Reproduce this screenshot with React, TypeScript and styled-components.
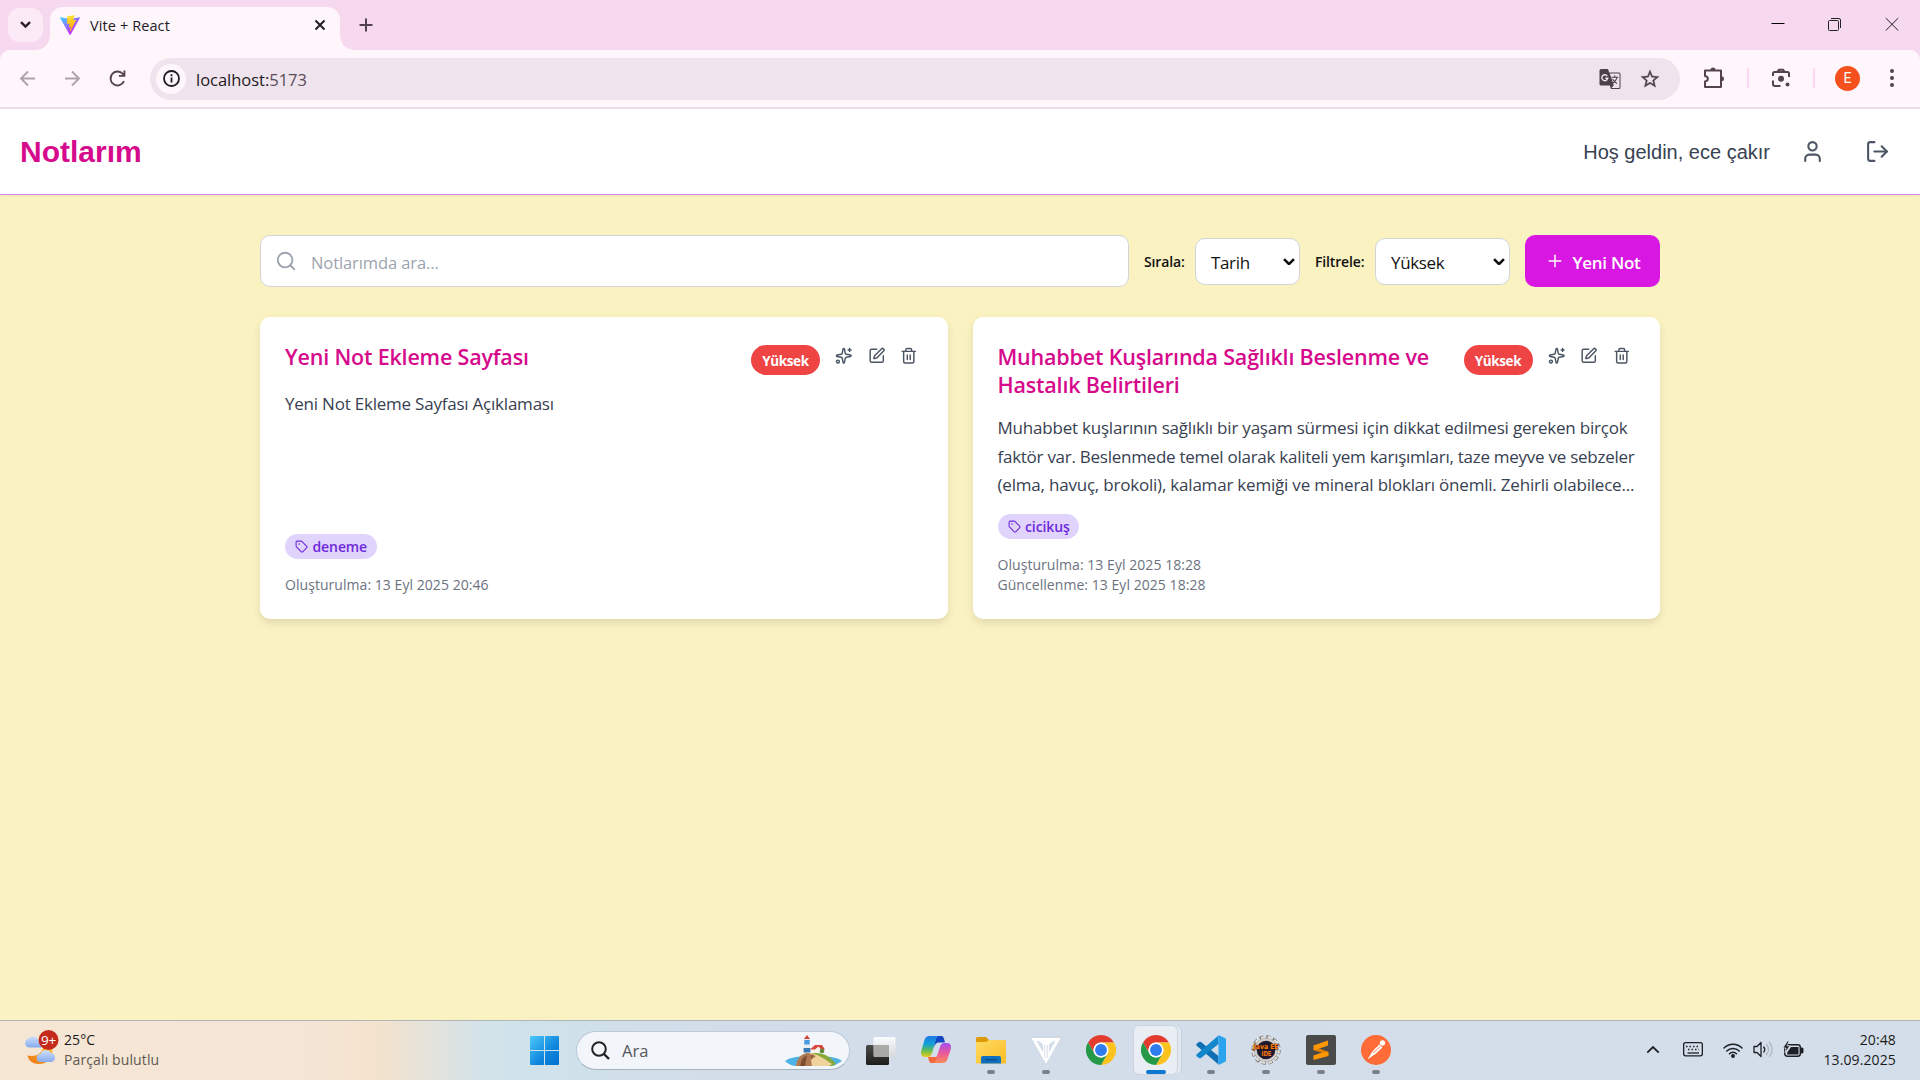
import React from 'react';
import styled, { createGlobalStyle, css } from 'styled-components';
import { LogOut, Plus, Search, Sparkles, SquarePen, Tag, Trash2, User } from 'lucide-react';

const ui = `'Open Sans', 'Noto Sans', sans-serif`;

const GlobalStyle = createGlobalStyle`
  *, *::before, *::after { box-sizing: border-box; }
  body { margin: 0; font-family: ${ui}; overflow: hidden; }
  button, input, select { font: inherit; }
  svg { display: block; flex-shrink: 0; }
`;

const Screen = styled.div`
  width: 1920px;
  height: 1080px;
  display: flex;
  flex-direction: column;
  overflow: hidden;
  background: #faf2c1;
`;

/* ---------- browser ---------- */

const TabStrip = styled.div`
  height: 50px;
  flex-shrink: 0;
  display: flex;
  align-items: flex-start;
  padding-left: 8px;
  background: #f7d9ef;
`;

const TabSearch = styled.button`
  width: 35px;
  height: 34px;
  margin: 8px 7px 0 0;
  padding: 0;
  border: 0;
  border-radius: 12px;
  background: #fdeaf7;
  display: grid;
  place-items: center;
`;

const ActiveTab = styled.div`
  position: relative;
  width: 290px;
  height: 43px;
  margin-top: 7px;
  padding: 0 13px 7px 10px;
  border-radius: 13px 13px 0 0;
  background: #fef6fa;
  display: flex;
  align-items: center;
  &::before,
  &::after {
    content: '';
    position: absolute;
    bottom: 0;
    width: 14px;
    height: 14px;
  }
  &::before {
    left: -14px;
    background: radial-gradient(circle at 0 0, transparent 13.5px, #fef6fa 14px);
  }
  &::after {
    right: -14px;
    background: radial-gradient(circle at 100% 0, transparent 13.5px, #fef6fa 14px);
  }
`;

const TabTitle = styled.span`
  flex: 1;
  margin-left: 10px;
  font-size: 14.5px;
  letter-spacing: 0.1px;
  color: #1f1a1e;
`;

const NewTab = styled.div`
  margin: 18px 0 0 19px;
`;

const WindowButtons = styled.div`
  margin: 17px 21px 0 auto;
  display: flex;
  gap: 43px;
`;

const ToolbarBack = styled.div`
  height: 59px;
  flex-shrink: 0;
  background: #f7d9ef;
`;

const Toolbar = styled.div`
  height: 59px;
  padding: 0 22px 1px 15px;
  border-bottom: 2px solid #efdeea;
  border-radius: 10px 10px 0 0;
  background: #fef6fa;
  display: flex;
  align-items: center;
`;

const NavButtons = styled.div`
  width: 135px;
  display: flex;
  align-items: center;
  gap: 20px;
`;

const AddressBar = styled.div`
  width: 1530px;
  height: 42px;
  margin-top: 1px;
  padding: 0 19px 0 6px;
  border-radius: 21px;
  background: #efe4ee;
  display: flex;
  align-items: center;
`;

const SiteInfo = styled.div`
  width: 30px;
  height: 30px;
  margin-right: 10px;
  border-radius: 50%;
  background: #fef6fa;
  display: grid;
  place-items: center;
`;

const Url = styled.span`
  flex: 1;
  padding-top: 1px;
  font-size: 16.5px;
  letter-spacing: -0.02px;
  color: #1f1a1e;
  span { color: #5a4d57; }
`;

const AddressActions = styled.div`
  display: flex;
  align-items: center;
  gap: 18px;
`;

const ToolbarActions = styled.div`
  flex: 1;
  padding-left: 23px;
  display: flex;
  align-items: center;
  gap: 22px;
  > :last-child { margin-left: auto; }
`;

const Divider = styled.span`
  width: 2px;
  height: 20px;
  border-radius: 1px;
  background: #fdd7f2;
`;

const Avatar = styled.span`
  width: 25px;
  height: 25px;
  margin-left: -2px;
  border-radius: 50%;
  background: #f4511e;
  color: #fff;
  font: 14px Roboto, sans-serif;
  display: grid;
  place-items: center;
`;

/* ---------- notes app ---------- */

const AppHeader = styled.header`
  position: relative;
  height: 86px;
  flex-shrink: 0;
  padding: 0 30px 0 20px;
  border-bottom: 1px solid #dc87e4;
  background: #fff;
  box-shadow: 0 1px 3px rgba(0, 0, 0, 0.06);
  display: flex;
  align-items: center;
  justify-content: space-between;
`;

const Brand = styled.h1`
  margin: 0;
  font: bold 30px 'Liberation Sans', Arial, sans-serif;
  color: #d60a8c;
`;

const UserArea = styled.div`
  display: flex;
  align-items: center;
  color: #4b5563;
`;

const Welcome = styled.span`
  margin-right: 30px;
  padding-top: 2px;
  font: 20px 'Liberation Sans', Arial, sans-serif;
  color: #374151;
`;

const IconSlot = styled.span<{ $left?: number }>`
  margin-left: ${(p) => p.$left ?? 0}px;
`;

const Main = styled.main`
  flex: 1;
  width: 1400px;
  margin: 0 auto;
  padding-top: 40px;
`;

const Controls = styled.div`
  display: flex;
  align-items: center;
  gap: 15px;
  margin-bottom: 30px;
`;

const SearchBox = styled.div`
  flex: 1;
  height: 52px;
  padding: 0 14px;
  border: 1px solid #d1d5db;
  border-radius: 10px;
  background: #fff;
  display: flex;
  align-items: center;
  gap: 14px;
  color: #9ca3af;
`;

const SearchInput = styled.input`
  flex: 1;
  padding: 2px 0 0;
  border: 0;
  outline: 0;
  background: none;
  font-size: 16.5px;
  letter-spacing: -0.1px;
  &::placeholder { color: #9ca3af; opacity: 1; }
`;

const Field = styled.label<{ $width: number }>`
  width: ${(p) => p.$width}px;
  display: flex;
  align-items: center;
  justify-content: space-between;
  font-size: 14px;
  font-weight: 600;
  letter-spacing: -0.15px;
  color: #111;
  white-space: nowrap;
`;

const SelectBox = styled.span<{ $width: number }>`
  width: ${(p) => p.$width}px;
  height: 47px;
  padding: 0 4px 0 15px;
  border: 1px solid #d1d5db;
  border-radius: 10px;
  background: #fff;
  display: flex;
  align-items: center;
  justify-content: space-between;
  font-size: 17px;
  font-weight: 400;
  letter-spacing: -0.35px;
  > span { padding-top: 3px; }
  > svg { margin-top: 1px; }
`;

const NewNote = styled.button`
  width: 135px;
  height: 52px;
  padding: 0;
  border: 0;
  border-radius: 10px;
  background: #d817e2;
  color: #fff;
  display: flex;
  align-items: center;
  justify-content: center;
  gap: 8px;
  font-size: 17px;
  font-weight: 600;
  letter-spacing: -0.3px;
  span { padding-top: 2px; }
`;

const Cards = styled.div`
  display: grid;
  grid-template-columns: repeat(2, minmax(0, 1fr));
  gap: 25px;
`;

const Card = styled.article`
  height: 302px;
  padding: 26px 25px 24px;
  border-radius: 10px;
  background: #fff;
  box-shadow: 0 4px 8px rgba(0, 0, 0, 0.1);
  display: flex;
  flex-direction: column;
`;

const CardHead = styled.div`
  display: flex;
  justify-content: space-between;
  align-items: flex-start;
  margin-bottom: 15px;
`;

const CardTitle = styled.h2`
  width: 440px;
  margin: 0;
  font-size: 21.5px;
  line-height: 28px;
  font-weight: 600;
  letter-spacing: -0.19px;
  color: #d60a8c;
  white-space: pre-line;
`;

const CardTools = styled.div`
  display: flex;
  align-items: flex-start;
  gap: 15px;
  padding-right: 5px;
  color: #4b5563;
  svg { margin-top: 4px; }
`;

const Priority = styled.span`
  width: 69px;
  height: 30px;
  margin: 2px 0 0;
  border-radius: 15px;
  background: #ef4444;
  color: #fff;
  font-size: 13.5px;
  line-height: 32px;
  font-weight: 700;
  letter-spacing: -0.4px;
  text-align: center;
`;

const Body = styled.p`
  margin: 0;
  font-size: 17px;
  line-height: 28.6px;
  color: #374151;
  white-space: nowrap;
`;

const BodyLine = styled.span<{ $tracking: number }>`
  display: block;
  letter-spacing: ${(p) => p.$tracking}px;
`;

const TagChip = styled.span`
  align-self: flex-start;
  height: 25px;
  margin-top: auto;
  padding: 0 9.5px 0 10px;
  border-radius: 13px;
  background: #e0d4fd;
  color: #6d28d9;
  display: flex;
  align-items: center;
  gap: 4.5px;
  font-size: 14px;
  font-weight: 600;
  letter-spacing: -0.1px;
`;

const Dates = styled.div`
  margin-top: 16px;
  font-size: 14px;
  line-height: 20px;
  letter-spacing: 0.05px;
  color: #6b7280;
`;

/* ---------- taskbar ---------- */

const Taskbar = styled.footer`
  height: 60px;
  flex-shrink: 0;
  border-top: 1px solid #b0b4bc;
  background: linear-gradient(90deg, #f6e6d4 0, #f5e5d6 300px, #f3e3cd 380px, #d4e3ea 480px, #cfe2ea 520px, #d3dde9 720px, #d4deea 100%);
  display: grid;
  grid-template-columns: 530px 875px 1fr;
  align-items: center;
`;

const Weather = styled.div`
  padding: 0 0 1px 24px;
  display: flex;
  align-items: center;
  gap: 4px;
  > svg { margin-bottom: 5px; }
`;

const Stack = styled.div<{ $end?: boolean }>`
  display: flex;
  flex-direction: column;
  font-size: 14px;
  line-height: 20px;
  letter-spacing: 0.12px;
  color: #1b1b1b;
  ${(p) => p.$end && css`text-align: right; padding-bottom: 1px;`}
`;

const Muted = styled.span`
  color: #5f5953;
`;

const Dock = styled.div`
  height: 59px;
  display: flex;
  align-items: center;
`;

const TaskSearch = styled.div`
  width: 274px;
  flex-shrink: 0;
  height: 39px;
  margin: 0 16px 0 17px;
  padding: 0 7px 0 14px;
  border: 1px solid #bccbd9;
  border-bottom-color: #a5b1bf;
  border-radius: 20px;
  background: #f2f5f9;
  display: flex;
  align-items: center;
  font-size: 16.5px;
  color: #55585c;
  span { flex: 1; margin-left: 12px; }
`;

const DockItems = styled.div`
  height: 59px;
  margin-left: 13px;
  display: flex;
  gap: 1px;
`;

const DockItem = styled.div<{ $state?: 'open' | 'active' }>`
  position: relative;
  width: 54px;
  height: 59px;
  padding-top: 14px;
  display: flex;
  flex-direction: column;
  align-items: center;
  gap: 5px;
  > svg { position: relative; }
  &::after {
    content: '';
    position: relative;
    width: ${(p) => (p.$state === 'active' ? 20 : 8)}px;
    height: 4px;
    border-radius: 2px;
    background: ${(p) => (p.$state === 'active' ? '#0b78d4' : p.$state ? '#7c8189' : 'transparent')};
  }
  ${(p) =>
    p.$state === 'active' &&
    css`
      &::before {
        content: '';
        position: absolute;
        left: 5px;
        top: 5px;
        width: 43px;
        height: 48px;
        border-radius: 5px;
        background: #e9eef5;
        box-shadow: 0 0 0 1px #cbd4df, 4px 0 0 0 #e3e9f1, 5px 0 0 0 #c5cfdb;
      }
    `}
`;

const Tray = styled.div`
  padding-right: 24px;
  display: flex;
  align-items: center;
  justify-content: flex-end;
`;

const TrayIcons = styled.div`
  margin-right: 19px;
  padding-bottom: 2px;
  display: flex;
  align-items: center;
  gap: 10px;
`;

/* ---------- drawings ---------- */

const ViteLogo = () => (
  <svg width="20" height="20" viewBox="0 0 256 257">
    <defs>
      <linearGradient id="va" x1="-.8%" x2="57.6%" y1="7.7%" y2="78.4%"><stop stopColor="#41D1FF" /><stop offset="1" stopColor="#BD34FE" /></linearGradient>
      <linearGradient id="vb" x1="43.4%" x2="50.3%" y1="2.2%" y2="89%"><stop stopColor="#FFEA83" /><stop offset=".083" stopColor="#FFDD35" /><stop offset="1" stopColor="#FFA800" /></linearGradient>
    </defs>
    <path fill="url(#va)" d="M255.2 37.9 134.9 253c-2.5 4.4-8.9 4.5-11.4 0L.9 37.9c-2.7-4.8 1.4-10.6 6.8-9.6l120.4 21.5c.7.1 1.5.1 2.3 0l117.9-21.5c5.4-1 9.6 4.8 6.9 9.6Z" />
    <path fill="url(#vb)" d="M185.4 0 96.400 17.500a3.300 3.300 0 0 0-2.600 3l-5.500 92.500c-.1 2.200 1.900 3.900 4 3.400l24.800-5.700c2.300-.5 4.400 1.500 3.900 3.800l-7.400 36c-.5 2.500 1.800 4.500 4.100 3.800l15.400-4.600c2.300-.7 4.600 1.400 4.100 3.800l-11.700 56.700c-.7 3.500 4 5.500 5.900 2.500l1.300-2 72.500-144.700c1.200-2.400-.9-5.200-3.500-4.700l-25.500 4.900c-2.400.5-4.400-1.800-3.800-4.100l16.700-57.700c.7-2.400-1.400-4.600-3.700-4.400Z" />
  </svg>
);

const Chevron = ({ w = 11, color = '#111', up = false, sw = 2.4 }: { w?: number; color?: string; up?: boolean; sw?: number }) => (
  <svg width={w} height={w * 0.65} viewBox="0 0 11 7" fill="none" stroke={color} strokeWidth={sw}>
    <path d={up ? 'M1 6l4.500-4.500L10 6' : 'M1 1l4.500 4.500L10 1'} />
  </svg>
);

const Arrow = ({ flip = false }: { flip?: boolean }) => (
  <svg width="25" height="25" viewBox="0 0 25 25" fill="none" stroke="#aea3aa" strokeWidth="1.900" transform={flip ? 'scale(-1 1)' : undefined}>
    <path d="M20 12.500H6.500M13 5.500l-7 7 7 7" />
  </svg>
);

const Reload = () => (
  <svg width="25" height="25" viewBox="0 0 25 25" fill="none" stroke="#54424e" strokeWidth="1.900">
    <path d="M19 15.200A7 7 0 1 1 18.200 8.300L19.500 10M19.400 4.500v5.400h-5.500" />
  </svg>
);

const Translate = () => (
  <svg width="22" height="22" viewBox="0 0 22 22">
    <path d="M2 1h7l1.200 3.500H20a1.500 1.500 0 0 1 1.500 1.500v13.500A1.500 1.500 0 0 1 20 21h-8l-1.200-3.500H2A1.500 1.500 0 0 1 .500 16V2.500A1.500 1.500 0 0 1 2 1Z" fill="#4b4148" />
    <path d="M10.700 5.500H20a.5.5 0 0 1 .5.500v13.400a.5.5 0 0 1-.5.500h-7.500l2.300-2.600Z" fill="#efe4ee" />
    <path d="M12.500 9.200h6.800M15.700 7.500v1.700M18 9.300c-.6 2.700-2.400 4.800-4.300 6M13.500 11c1 2 2.500 3.500 4.500 4.500" stroke="#4b4148" strokeWidth="1.100" fill="none" />
    <path d="M8.300 8A3 3 0 1 0 8.800 10.200H6.300" stroke="#efe4ee" strokeWidth="1.400" fill="none" />
  </svg>
);

const Star = () => (
  <svg width="22" height="22" viewBox="0 0 24 24" fill="#4b4148" stroke="#4b4148" strokeWidth=".3">
    <path d="m22 9.240-7.190-.620L12 2 9.190 8.630 2 9.240l5.460 4.730L5.820 21 12 17.270 18.180 21l-1.630-7.030L22 9.240zM12 15.400l-3.760 2.270 1-4.280-3.320-2.880 4.380-.380L12 6.100l1.710 4.040 4.380.380-3.320 2.880 1 4.280L12 15.400z" />
  </svg>
);

const Puzzle = () => (
  <svg width="22" height="22" viewBox="0 0 22 22" fill="none" stroke="#54424e" strokeWidth="2">
    <path d="M2 3.500h16v16.500H2v-5.500c3.800-.5 3.800-5 0-5.500Z" strokeLinejoin="round" />
    <path d="M7.500 3a2.500 2.500 0 0 1 5 0ZM18.500 9.300a2.500 2.500 0 0 1 0 5Z" fill="#54424e" stroke="none" />
  </svg>
);

const Lens = () => (
  <svg width="20" height="20" viewBox="0 0 20 20" fill="none" stroke="#54424e" strokeWidth="2">
    <path d="M2 8V5.500A1.500 1.500 0 0 1 3.500 4h13A1.500 1.500 0 0 1 18 5.500V9M2 12.500v3.500A2 2 0 0 0 4 18h5.500M6.500 3.500 8 1.800h4l1.500 1.700" />
    <circle cx="10" cy="10.700" r="3" fill="#54424e" stroke="none" />
    <circle cx="16.500" cy="16.500" r="2" fill="#54424e" stroke="none" />
  </svg>
);

const WeatherIcon = () => (
  <svg width="36" height="36" viewBox="0 0 36 36">
    <defs>
      <linearGradient id="cl" x1="0" x2="0" y1="0" y2="1"><stop stopColor="#cfe0fa" /><stop offset="1" stopColor="#86abeb" /></linearGradient>
      <linearGradient id="mo" x1="1" x2="0" y1="0" y2="1"><stop stopColor="#fbbd2c" /><stop offset="1" stopColor="#ec7413" /></linearGradient>
    </defs>
    <path d="M28 18c2 10-5 16-13 16-6 0-10.500-3-11.500-8.500C10 27 17 25 19 18Z" fill="url(#mo)" />
    <path d="M5 17.500a4.500 4.500 0 0 1-.500-8.800C6 5.500 12 5 14 9.500h3v8Z" fill="url(#cl)" />
    <path d="M17 32a4 4 0 0 1-.500-8c1.500-5 9-5 10.500-1 5-.5 6 9-.5 9Z" fill="url(#cl)" />
    <circle cx="24.500" cy="10" r="10" fill="#c42b1c" />
    <text x="24.500" y="14.900" textAnchor="middle" fontFamily="Open Sans, sans-serif" fontSize="13.500" fill="#fff" letterSpacing="-.3">9+</text>
  </svg>
);

const WindowsLogo = () => (
  <svg width="29" height="29" viewBox="0 0 29 29">
    <defs><linearGradient id="wi" x1="0" y1="0" x2="1" y2="1" gradientUnits="objectBoundingBox"><stop stopColor="#4cc8fb" /><stop offset=".6" stopColor="#0f86dd" /><stop offset="1" stopColor="#0070cf" /></linearGradient></defs>
    <path fill="url(#wi)" d="M1 0h13v14H0V1a1 1 0 0 1 1-1ZM15 0h13a1 1 0 0 1 1 1v13H15ZM0 15h14v14H1a1 1 0 0 1-1-1ZM15 15h14v13a1 1 0 0 1-1 1H15Z" />
  </svg>
);

const Lighthouse = () => (
  <svg width="57" height="32" viewBox="0 0 57 32">
    <path d="M0 26c5-4 15-5 28-5s25 1 29 5c-5 3-8 5-11 5H12C7 31 3 29 0 26Z" fill="#4db3e6" />
    <path d="M11 31c1-6 5-12 12-13h9c10 1 14 5 19 11l-4 2Z" fill="#8aa83a" />
    <path d="M11 31c1-6 5-12 14-13 8 1 16 7 22 11l-3 2Z" fill="#f0d39c" />
    <path d="M11 31c1-7 4-12 12-13l8 3-5 4 1 6Z" fill="#b07a50" />
    <path d="m17 24 5-4-2 11h-5ZM26 21l3-2-3 5Z" fill="#7c4c31" />
    <path d="M19.500 4h5l1 14h-7Z" fill="#e9edf2" /><path d="M19.300 5h5.400v4.500h-5.400Z" fill="#4a9be0" /><path d="M18.600 13h6.800v4.500h-6.800Z" fill="#3978b6" /><path d="m19 4 3-4 3 4Z" fill="#d0413a" />
    <path d="M27 13h11v5H27Z" fill="#f6f4ef" /><path d="m25 14.500 5-4.500h7l3 4.500h-4l-2.500-3-3.500 3Z" fill="#d9473c" />
    <circle cx="37" cy="16" r="2.300" fill="#5c8a36" />
  </svg>
);

const TaskView = () => (
  <svg width="30" height="30" viewBox="0 0 30 30">
    <defs>
      <linearGradient id="tv" x1="0" x2="0" y1="0" y2="1"><stop stopColor="#4a4a49" /><stop offset="1" stopColor="#1d1d1c" /></linearGradient>
      <linearGradient id="tw" x1="0" x2="0" y1="0" y2="1"><stop stopColor="#fff" /><stop offset="1" stopColor="#d8d8d8" /></linearGradient>
    </defs>
    <rect x="0" y="9" width="23" height="20" rx="1.500" fill="url(#tv)" />
    <rect x="7.500" y="1" width="22" height="20" rx="1.500" fill="url(#tw)" opacity=".88" />
    <path d="M8 9h15v12H8Z" fill="#a9a9a8" />
  </svg>
);

const Copilot = () => (
  <svg width="30" height="30" viewBox="0 0 30 30">
    <defs>
      <linearGradient id="c1" x1="0" x2="0" y1="0" y2="1"><stop stopColor="#1e78e8" /><stop offset=".4" stopColor="#13a3d2" /><stop offset=".7" stopColor="#68bd4d" /><stop offset="1" stopColor="#efcb1d" /></linearGradient>
      <linearGradient id="c2" x1="0" x2="0" y1="0" y2="1"><stop stopColor="#a24cf0" /><stop offset=".5" stopColor="#e95a9c" /><stop offset="1" stopColor="#fa8a54" /></linearGradient>
    </defs>
    <path d="M15 1h5.500c2 0 2.500 2.500 3.500 6.500h-6c-3 0-4 2-5 5Z" fill="#1546c2" />
    <path d="M15 28h-4.500c-2 0-2.500-2-3.500-6h7c2 0 3-2 4-5Z" fill="#f26a3c" />
    <path d="M8.500 1h9c-2 1-2.500 3-3.500 7l-3 10c-1 3-2 4-4.500 4H4c-4 0-4.500-3-3.500-7L3.500 5c1-3 2.500-4 5-4Z" fill="url(#c1)" />
    <path d="M21.500 28h-9c2-1 2.500-3 3.500-7l3-9c1-3 2-4 4.500-4H26c4 0 4.500 3 3.500 7l-3 9c-1 3-2.500 4-5 4Z" fill="url(#c2)" />
  </svg>
);

const Explorer = () => (
  <svg width="30" height="30" viewBox="0 0 30 30">
    <defs><linearGradient id="ex" x1="0" x2="1" y1="0" y2="1"><stop stopColor="#ffdb63" /><stop offset="1" stopColor="#f9bd26" /></linearGradient></defs>
    <path d="M0 3.500A1.500 1.500 0 0 1 1.500 2H10l3 3H28a2 2 0 0 1 2 2H0Z" fill="#dc9b07" />
    <path d="M0 7 10 7 13 5h15a2 2 0 0 1 2 2v21.500H0Z" fill="url(#ex)" />
    <path d="M5 28.500V23a2 2 0 0 1 2-2h16a2 2 0 0 1 2 2v5.500Z" fill="#0f70c0" /><path d="M9 24.800h12" stroke="#07477e" strokeWidth="1.200" />
  </svg>
);

const Triangle = () => (
  <svg width="30" height="30" viewBox="0 0 30 30">
    <path fillRule="evenodd" fill="#fff" d="M0 2h30L15.500 28h-1ZM5.500 5.500l6.500 12V9.500L8.500 6.500ZM24.500 5.500l-3 1L18 9.500v8Z" />
    <path d="M0 2.300h30" stroke="#b6bfca" strokeWidth=".7" />
    <path d="M13.800 10v13M16.200 10v13" stroke="#c4cedb" strokeWidth=".7" />
  </svg>
);

const Chrome = () => (
  <svg width="30" height="30" viewBox="0 0 48 48">
    <path fill="#e33b2e" d="M24 0a24 24 0 0 1 20.800 12H24a12 12 0 0 0-10.400 18L3.200 12A24 24 0 0 1 24 0Z" />
    <path fill="#fcc31e" d="M44.800 12A24 24 0 0 1 24 48l10.400-18A12 12 0 0 0 24 12Z" />
    <path fill="#249a48" d="M24 48A24 24 0 0 1 3.200 12l10.400 18A12 12 0 0 0 34.400 30Z" />
    <circle cx="24" cy="24" r="12" fill="#fff" /><circle cx="24" cy="24" r="9.500" fill="#2f7cee" />
  </svg>
);

const VsCode = () => (
  <svg width="30" height="30" viewBox="0 0 30 30">
    <path d="M1 8.500 3 7c.7-.5 1.300-.4 2 .1L22.500 21v8.500L1 11c-1-.8-1-1.700 0-2.500Z" fill="#0f6fb4" />
    <path d="M1 21.500 3 23c.7.500 1.300.4 2-.1L22.500 9V.500L1 19c-1 .8-1 1.700 0 2.500Z" fill="#1287cc" />
    <path d="M22.500.100 28.800 3A2 2 0 0 1 30 5v20a2 2 0 0 1-1.200 2l-6.300 3Z" fill="#2ca3ef" />
  </svg>
);

const Eclipse = () => (
  <svg width="30" height="30" viewBox="0 0 30 30">
    <circle cx="15" cy="15" r="12.800" fill="none" stroke="#77736e" strokeWidth="3.800" strokeDasharray="4 2.700" />
    <circle cx="15" cy="15" r="12.600" fill="none" stroke="#e4e2de" strokeWidth="2.800" strokeDasharray="3.300 3.400" strokeDashoffset="-.35" />
    <circle cx="15" cy="15" r="11.800" fill="#d3d1cd" stroke="#8a8782" strokeWidth=".4" /><circle cx="15" cy="15" r="9.300" fill="#211a2e" />
    <text x="15" y="14.200" textAnchor="middle" fontFamily="DejaVu Sans, sans-serif" fontWeight="bold" fontSize="6.800" fill="#ff7a0c" stroke="#3a1a08" strokeWidth=".8" paintOrder="stroke" textLength="25" lengthAdjust="spacingAndGlyphs">Java EE</text>
    <text x="15.500" y="20.500" textAnchor="middle" fontFamily="DejaVu Sans, sans-serif" fontWeight="bold" fontSize="6.800" fill="#ff7a0c" textLength="10" lengthAdjust="spacingAndGlyphs">IDE</text>
  </svg>
);

const Sublime = () => (
  <svg width="30" height="30" viewBox="0 0 30 30">
    <rect width="30" height="30" rx="2" fill="#4a4a4a" />
    <path d="M7.500 10.500 22 5.500v5L13 13.700l9.500 3.200v4L7.500 25v-4.500l8.500-3L7.500 15Z" fill="#ff9800" />
    <path d="m7.500 15 9 2.500 6-.6L13 13.700Z" fill="#e07e00" />
  </svg>
);

const Postman = () => (
  <svg width="30" height="30" viewBox="0 0 30 30">
    <circle cx="15" cy="15" r="15" fill="#ff6c37" />
    <path d="M7 23.500 11 17l7-7.500 3.500 3-7 6.500L7 24ZM11 18.500l-1 4" fill="#fff" />
    <circle cx="21.500" cy="8" r="2.700" fill="#fff" /><path d="m12 18 7-6M14 12.500l3-1.500" stroke="#ff6c37" strokeWidth=".8" />
  </svg>
);

const Keyboard = () => (
  <svg width="20" height="15" viewBox="0 0 20 15" fill="none" stroke="#1c1f24" strokeWidth="1.300">
    <rect x=".65" y=".65" width="18.700" height="13.200" rx="2" /><path d="M3 4.500h14M5 7.500h11" strokeWidth="1.500" strokeDasharray="1.500 2" /><path d="M4.500 11h11.500" />
  </svg>
);

const Wifi = () => (
  <svg width="20" height="16" viewBox="0 0 20 16" fill="none" stroke="#1c1f24" strokeWidth="1.500" strokeLinecap="round">
    <path d="M1 6a12.500 12.500 0 0 1 18 0M3.800 9a8.700 8.700 0 0 1 12.400 0M6.500 11.800a5 5 0 0 1 7 0" /><circle cx="10" cy="14" r="1.200" fill="#1c1f24" />
  </svg>
);

const Volume = () => (
  <svg width="20" height="17" viewBox="0 0 20 17" fill="none" stroke="#1c1f24" strokeWidth="1.300" strokeLinecap="round">
    <path d="M1 5.500h3L8 1.500v14l-4-4H1Z" strokeLinejoin="round" /><path d="M10.800 6a4 4 0 0 1 0 5" /><path d="M13.500 3.500c2.500 3 2.500 7 0 10M16.500 1.500c3.500 4 3.500 10 0 14" stroke="#aeb6c0" />
  </svg>
);

const Battery = () => (
  <svg width="21" height="17" viewBox="0 0 21 17">
    <rect x="1.700" y="3.700" width="15.600" height="11.600" rx="2.500" fill="#d4deea" stroke="#1c1f24" strokeWidth="1.400" />
    <path d="M18 6.500h1a1.500 1.500 0 0 1 1.500 1.500v3a1.500 1.500 0 0 1-1.500 1.500h-1Z" fill="#1c1f24" /><path d="M8 6h7.500v7.500H4L4.500 11Z" fill="#1c1f24" />
    <path d="M4.500 0 0 7h3L1.800 11.500 7 5H4l2-5Z" fill="#1c1f24" stroke="#d4deea" strokeWidth=".7" />
  </svg>
);

/* ---------- data ---------- */

interface Line { text: string; tracking: number }
interface Note { title: string; body: Line[]; tag: string; dates: string[] }

const notes: Note[] = [
  {
    title: 'Yeni Not Ekleme Sayfası',
    body: [{ text: 'Yeni Not Ekleme Sayfası Açıklaması', tracking: -0.22 }],
    tag: 'deneme',
    dates: ['Oluşturulma: 13 Eyl 2025 20:46'],
  },
  {
    title: 'Muhabbet Kuşlarında Sağlıklı Beslenme ve\nHastalık Belirtileri',
    body: [
      { text: 'Muhabbet kuşlarının sağlıklı bir yaşam sürmesi için dikkat edilmesi gereken birçok', tracking: -0.21 },
      { text: 'faktör var. Beslenmede temel olarak kaliteli yem karışımları, taze meyve ve sebzeler', tracking: -0.265 },
      { text: '(elma, havuç, brokoli), kalamar kemiği ve mineral blokları önemli. Zehirli olabilece...', tracking: -0.205 },
    ],
    tag: 'cicikuş',
    dates: ['Oluşturulma: 13 Eyl 2025 18:28', 'Güncellenme: 13 Eyl 2025 18:28'],
  },
];

const NoteCard = ({ note }: { note: Note }) => (
  <Card>
    <CardHead>
      <CardTitle>{note.title}</CardTitle>
      <CardTools>
        <Priority>Yüksek</Priority>
        <Sparkles size={17.5} />
        <SquarePen size={17.5} />
        <Trash2 size={17.5} />
      </CardTools>
    </CardHead>
    <Body>{note.body.map((l) => <BodyLine key={l.text} $tracking={l.tracking}>{l.text}</BodyLine>)}</Body>
    <TagChip><Tag size={13} strokeWidth={2} />{note.tag}</TagChip>
    <Dates>{note.dates.map((d) => <div key={d}>{d}</div>)}</Dates>
  </Card>
);

export default function App() {
  return (
    <Screen>
      <GlobalStyle />
      <TabStrip>
        <TabSearch><Chevron color="#2a2027" /></TabSearch>
        <ActiveTab>
          <ViteLogo />
          <TabTitle>Vite + React</TabTitle>
          <svg width="14" height="14" viewBox="0 0 14 14" stroke="#1f1a1e" strokeWidth="1.900"><path d="m2.500 2.500 9 9m0-9-9 9" /></svg>
        </ActiveTab>
        <NewTab><svg width="14" height="14" viewBox="0 0 14 14" stroke="#54424e" strokeWidth="2"><path d="M7 .5v13M.5 7h13" /></svg></NewTab>
        <WindowButtons>
          <svg width="14" height="14" viewBox="0 0 14 14" stroke="#000"><path d="M.5 6.500h13" /></svg>
          <svg width="14" height="14" viewBox="0 0 14 14" fill="none" stroke="#222"><rect x=".5" y="3.500" width="10" height="10" rx="1" /><path d="M3 1.500h8A1.500 1.500 0 0 1 12.500 3v8" /></svg>
          <svg width="14" height="14" viewBox="0 0 14 14" stroke="#222"><path d="m.7 1 12.600 12.600M13.300 1 .7 13.600" /></svg>
        </WindowButtons>
      </TabStrip>
      <ToolbarBack>
        <Toolbar>
          <NavButtons><Arrow /><Arrow flip /><Reload /></NavButtons>
          <AddressBar>
            <SiteInfo>
              <svg width="17" height="17" viewBox="0 0 17 17" fill="none" stroke="#1f1a1e" strokeWidth="1.800"><circle cx="8.500" cy="8.500" r="7.500" /><path d="M8.500 7.500v5M8.500 4.300v1.900" /></svg>
            </SiteInfo>
            <Url>localhost:<span>5173</span></Url>
            <AddressActions><Translate /><Star /></AddressActions>
          </AddressBar>
          <ToolbarActions>
            <Puzzle /><Divider /><Lens /><Divider /><Avatar>E</Avatar>
            <svg width="12" height="20" viewBox="0 0 12 20" fill="#54424e"><circle cx="6" cy="3" r="2" /><circle cx="6" cy="10" r="2" /><circle cx="6" cy="17" r="2" /></svg>
          </ToolbarActions>
        </Toolbar>
      </ToolbarBack>

      <AppHeader>
        <Brand>Notlarım</Brand>
        <UserArea>
          <Welcome>Hoş geldin, ece çakır</Welcome>
          <IconSlot><User size={25} /></IconSlot>
          <IconSlot $left={40}><LogOut size={25} /></IconSlot>
        </UserArea>
      </AppHeader>

      <Main>
        <Controls>
          <SearchBox>
            <Search size={22} />
            <SearchInput placeholder="Notlarımda ara..." />
          </SearchBox>
          <Field $width={156}>Sırala:<SelectBox $width={105}><span>Tarih</span><Chevron w={12} /></SelectBox></Field>
          <Field $width={195}>Filtrele:<SelectBox $width={135}><span>Yüksek</span><Chevron w={12} /></SelectBox></Field>
          <NewNote><Plus size={20} strokeWidth={1.8} /><span>Yeni Not</span></NewNote>
        </Controls>
        <Cards>{notes.map((n) => <NoteCard key={n.title} note={n} />)}</Cards>
      </Main>

      <Taskbar>
        <Weather>
          <WeatherIcon />
          <Stack><span>25°C</span><Muted>Parçalı bulutlu</Muted></Stack>
        </Weather>
        <Dock>
          <WindowsLogo />
          <TaskSearch>
            <svg width="19" height="19" viewBox="0 0 19 19" fill="none" stroke="#222" strokeWidth="2"><circle cx="8" cy="8" r="6.800" /><path d="m13 13 5 5" strokeWidth="2.400" /></svg>
            <span>Ara</span>
            <Lighthouse />
          </TaskSearch>
          <TaskView />
          <DockItems>
            <DockItem><Copilot /></DockItem>
            <DockItem $state="open"><Explorer /></DockItem>
            <DockItem $state="open"><Triangle /></DockItem>
            <DockItem><Chrome /></DockItem>
            <DockItem $state="active"><Chrome /></DockItem>
            <DockItem $state="open"><VsCode /></DockItem>
            <DockItem $state="open"><Eclipse /></DockItem>
            <DockItem $state="open"><Sublime /></DockItem>
            <DockItem $state="open"><Postman /></DockItem>
          </DockItems>
        </Dock>
        <Tray>
          <TrayIcons>
            <Chevron w={14} up sw={1.4} color="#1c1f24" />
            <IconSlot $left={13}><Keyboard /></IconSlot>
            <IconSlot $left={10}><Wifi /></IconSlot>
            <Volume />
            <Battery />
          </TrayIcons>
          <Stack $end><span>20:48</span><span>13.09.2025</span></Stack>
        </Tray>
      </Taskbar>
    </Screen>
  );
}
